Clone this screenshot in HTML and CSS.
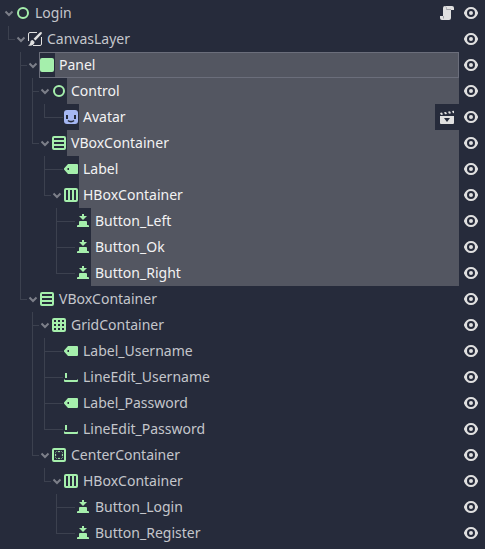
FILE: index.html
```html
<!DOCTYPE html>
<html lang="en">
<head>
<meta charset="utf-8">
<meta name="viewport" content="width=device-width, initial-scale=1">
<title>Scene tree</title>
<link rel="stylesheet" href="styles.css">
</head>
<body>
<svg class="sprites" aria-hidden="true">
  <symbol id="fold" viewBox="0 0 12 12"><path d="M2.500 4.500 6 8l3.500-3.500" fill="none" stroke="#7c7f89" stroke-width="2"/></symbol>
  <symbol id="control" viewBox="0 0 16 16"><circle cx="8" cy="8" r="5" fill="none" stroke="#a5efac" stroke-width="2"/></symbol>
  <symbol id="canvas" viewBox="0 0 16 16"><path d="M10 1.500H3A1.500 1.500 0 0 0 1.500 3v7M6 14.500h7a1.500 1.500 0 0 0 1.500-1.500V6" fill="none" stroke="#e0e0e0"/><path d="M14.600 1.300c-.5-.5-1.200-.3-1.800.2L6.600 7.700l1.900 1.900 6-6.500c.5-.6.600-1.300.1-1.800ZM5.600 9c-1.500 0-2.100 1-2.200 2.200C3.300 12.800 2.500 14 1 14.500c3 .9 6.300-.2 6.600-3.500Z" fill="#e0e0e0"/></symbol>
  <symbol id="panel" viewBox="0 0 16 16"><rect x="1" y="1" width="14" height="14" rx="2" fill="#a5efac"/></symbol>
  <symbol id="sprite" viewBox="0 0 16 16"><rect x="1" y="1" width="14" height="14" rx="3" fill="#a5b7f3"/><path d="M3 6h2v4H3zM11 6h2v4h-2z" fill="#262b3b"/><path d="M5 11.500c1.500 1.500 4.500 1.500 6 0" fill="none" stroke="#262b3b" stroke-width="1.600"/></symbol>
  <symbol id="vbox" viewBox="0 0 16 16"><path fill="#a5efac" fill-rule="evenodd" d="M3 1h10a2 2 0 0 1 2 2v10a2 2 0 0 1-2 2H3a2 2 0 0 1-2-2V3a2 2 0 0 1 2-2ZM3 3v2h10V3ZM3 7v2h10V7ZM3 11v2h10v-2Z"/></symbol>
  <symbol id="hbox" viewBox="0 0 16 16"><path fill="#a5efac" fill-rule="evenodd" d="M3 1h10a2 2 0 0 1 2 2v10a2 2 0 0 1-2 2H3a2 2 0 0 1-2-2V3a2 2 0 0 1 2-2ZM3 3v10h2V3ZM7 3v10h2V3ZM11 3v10h2V3Z"/></symbol>
  <symbol id="grid" viewBox="0 0 16 16"><path fill="#a5efac" fill-rule="evenodd" d="M3 1h10a2 2 0 0 1 2 2v10a2 2 0 0 1-2 2H3a2 2 0 0 1-2-2V3a2 2 0 0 1 2-2ZM3 3v2h2V3ZM7 3v2h2V3ZM11 3v2h2V3ZM3 7v2h2V7ZM7 7v2h2V7ZM11 7v2h2V7ZM3 11v2h2v-2ZM7 11v2h2v-2ZM11 11v2h2v-2Z"/></symbol>
  <symbol id="center" viewBox="0 0 16 16"><rect x="2" y="2" width="12" height="12" rx="1" fill="none" stroke="#a5efac" stroke-width="2"/><path d="M6.500 4h3L8 5.500ZM4 6.500v3L5.500 8ZM12 6.500v3L10.500 8ZM6.500 12h3L8 10.500Z" fill="#a5efac"/><path d="M4.500 5.500l1-1M10.500 4.500l1 1M4.500 10.500l1 1M11.500 10.500l-1 1" stroke="#a5efac"/></symbol>
  <symbol id="label" viewBox="0 0 16 16"><path fill="#a5efac" fill-rule="evenodd" d="M5 3h9a1 1 0 0 1 1 1v8a1 1 0 0 1-1 1H5L1 8.500v-1ZM4.500 7v2h1.500V7Z"/></symbol>
  <symbol id="line" viewBox="0 0 16 16"><path fill="#a5efac" d="M2 4h2v5H2zM1 10.500h1V11h12v-.500h1V12a1 1 0 0 1-1 1H2a1 1 0 0 1-1-1Z"/></symbol>
  <symbol id="button" viewBox="0 0 16 16"><path fill="#a5efac" d="M7 1h2v2h3L8 7 4 3h3ZM5 8h6a1 1 0 0 1 1 1v3h1a1 1 0 0 1 1 1v1H2v-1a1 1 0 0 1 1-1h1V9a1 1 0 0 1 1-1Z"/></symbol>
  <symbol id="eye" viewBox="0 0 16 16"><path fill="#e0e0e0" fill-rule="evenodd" d="M8 2c3.200 0 5.900 2 7 5.500v1C13.900 12 11.200 14 8 14s-5.900-2-7-5.500v-1C2.100 4 4.800 2 8 2Zm0 2a4 4 0 1 0 0 8 4 4 0 0 0 0-8Zm0 2a2 2 0 1 1 0 4 2 2 0 0 1 0-4Z"/></symbol>
  <symbol id="script" viewBox="0 0 16 16"><path fill="#e0e0e0" d="M6 1h7a2 2 0 0 1 2 2v2h-3v8a2 2 0 0 1-2 2H3a2 2 0 0 1-2-2v-2h3V3a2 2 0 0 1 2-2Z"/><path d="M4.500 11v2.500M6.500 1.500C7.500 2 7.500 3 7.500 4.500H12" fill="none" stroke="#a3a4aa"/></symbol>
  <symbol id="scene" viewBox="0 0 16 16"><path fill="#e0e0e0" fill-rule="evenodd" d="M1 7h14v7a1 1 0 0 1-1 1H2a1 1 0 0 1-1-1ZM5 9l3 4 3-4ZM1 4l2-.500 1 2-2 .500ZM5 3.300l2-.400 1 2-2 .400ZM9 2.700l2-.400 1 2-2 .400ZM13 2l2-.300V4l-1 .200Z"/></symbol>
</svg>
<ul class="tree root">
  <li><div class="row"><button class="fold" aria-label="Fold Login"><svg><use href="#fold"/></svg></button><div class="item"><svg class="icon"><use href="#control"/></svg><span class="name">Login</span><button class="action" aria-label="Open script"><svg class="icon"><use href="#script"/></svg></button></div><button class="eye" aria-label="Toggle Login"><svg class="icon"><use href="#eye"/></svg></button></div>
  <ul class="tree">
    <li><div class="row"><button class="fold" aria-label="Fold CanvasLayer"><svg><use href="#fold"/></svg></button><div class="item"><svg class="icon"><use href="#canvas"/></svg><span class="name">CanvasLayer</span></div><button class="eye" aria-label="Toggle CanvasLayer"><svg class="icon"><use href="#eye"/></svg></button></div>
    <ul class="tree">
      <li class="selected"><div class="row"><button class="fold" aria-label="Fold Panel"><svg><use href="#fold"/></svg></button><div class="item focused"><svg class="icon"><use href="#panel"/></svg><span class="name">Panel</span></div><button class="eye" aria-label="Toggle Panel"><svg class="icon"><use href="#eye"/></svg></button></div>
      <ul class="tree">
        <li><div class="row"><button class="fold" aria-label="Fold Control"><svg><use href="#fold"/></svg></button><div class="item"><svg class="icon"><use href="#control"/></svg><span class="name">Control</span></div><button class="eye" aria-label="Toggle Control"><svg class="icon"><use href="#eye"/></svg></button></div>
        <ul class="tree">
          <li class="leaf"><div class="row"><div class="item"><svg class="icon"><use href="#sprite"/></svg><span class="name">Avatar</span><button class="action" aria-label="Open scene"><svg class="icon"><use href="#scene"/></svg></button></div><button class="eye" aria-label="Toggle Avatar"><svg class="icon"><use href="#eye"/></svg></button></div></li>
        </ul></li>
        <li><div class="row"><button class="fold" aria-label="Fold VBoxContainer"><svg><use href="#fold"/></svg></button><div class="item"><svg class="icon"><use href="#vbox"/></svg><span class="name">VBoxContainer</span></div><button class="eye" aria-label="Toggle VBoxContainer"><svg class="icon"><use href="#eye"/></svg></button></div>
        <ul class="tree">
          <li class="leaf"><div class="row"><div class="item"><svg class="icon"><use href="#label"/></svg><span class="name">Label</span></div><button class="eye" aria-label="Toggle Label"><svg class="icon"><use href="#eye"/></svg></button></div></li>
          <li><div class="row"><button class="fold" aria-label="Fold HBoxContainer"><svg><use href="#fold"/></svg></button><div class="item"><svg class="icon"><use href="#hbox"/></svg><span class="name">HBoxContainer</span></div><button class="eye" aria-label="Toggle HBoxContainer"><svg class="icon"><use href="#eye"/></svg></button></div>
          <ul class="tree">
            <li class="leaf"><div class="row"><div class="item"><svg class="icon"><use href="#button"/></svg><span class="name">Button_Left</span></div><button class="eye" aria-label="Toggle Button_Left"><svg class="icon"><use href="#eye"/></svg></button></div></li>
            <li class="leaf"><div class="row"><div class="item"><svg class="icon"><use href="#button"/></svg><span class="name">Button_Ok</span></div><button class="eye" aria-label="Toggle Button_Ok"><svg class="icon"><use href="#eye"/></svg></button></div></li>
            <li class="leaf"><div class="row"><div class="item"><svg class="icon"><use href="#button"/></svg><span class="name">Button_Right</span></div><button class="eye" aria-label="Toggle Button_Right"><svg class="icon"><use href="#eye"/></svg></button></div></li>
          </ul></li>
        </ul></li>
      </ul></li>
      <li><div class="row"><button class="fold" aria-label="Fold VBoxContainer"><svg><use href="#fold"/></svg></button><div class="item"><svg class="icon"><use href="#vbox"/></svg><span class="name">VBoxContainer</span></div><button class="eye" aria-label="Toggle VBoxContainer"><svg class="icon"><use href="#eye"/></svg></button></div>
      <ul class="tree">
        <li><div class="row"><button class="fold" aria-label="Fold GridContainer"><svg><use href="#fold"/></svg></button><div class="item"><svg class="icon"><use href="#grid"/></svg><span class="name">GridContainer</span></div><button class="eye" aria-label="Toggle GridContainer"><svg class="icon"><use href="#eye"/></svg></button></div>
        <ul class="tree">
          <li class="leaf"><div class="row"><div class="item"><svg class="icon"><use href="#label"/></svg><span class="name">Label_Username</span></div><button class="eye" aria-label="Toggle Label_Username"><svg class="icon"><use href="#eye"/></svg></button></div></li>
          <li class="leaf"><div class="row"><div class="item"><svg class="icon"><use href="#line"/></svg><span class="name">LineEdit_Username</span></div><button class="eye" aria-label="Toggle LineEdit_Username"><svg class="icon"><use href="#eye"/></svg></button></div></li>
          <li class="leaf"><div class="row"><div class="item"><svg class="icon"><use href="#label"/></svg><span class="name">Label_Password</span></div><button class="eye" aria-label="Toggle Label_Password"><svg class="icon"><use href="#eye"/></svg></button></div></li>
          <li class="leaf"><div class="row"><div class="item"><svg class="icon"><use href="#line"/></svg><span class="name">LineEdit_Password</span></div><button class="eye" aria-label="Toggle LineEdit_Password"><svg class="icon"><use href="#eye"/></svg></button></div></li>
        </ul></li>
        <li><div class="row"><button class="fold" aria-label="Fold CenterContainer"><svg><use href="#fold"/></svg></button><div class="item"><svg class="icon"><use href="#center"/></svg><span class="name">CenterContainer</span></div><button class="eye" aria-label="Toggle CenterContainer"><svg class="icon"><use href="#eye"/></svg></button></div>
        <ul class="tree">
          <li><div class="row"><button class="fold" aria-label="Fold HBoxContainer"><svg><use href="#fold"/></svg></button><div class="item"><svg class="icon"><use href="#hbox"/></svg><span class="name">HBoxContainer</span></div><button class="eye" aria-label="Toggle HBoxContainer"><svg class="icon"><use href="#eye"/></svg></button></div>
          <ul class="tree">
            <li class="leaf"><div class="row"><div class="item"><svg class="icon"><use href="#button"/></svg><span class="name">Button_Login</span></div><button class="eye" aria-label="Toggle Button_Login"><svg class="icon"><use href="#eye"/></svg></button></div></li>
            <li class="leaf"><div class="row"><div class="item"><svg class="icon"><use href="#button"/></svg><span class="name">Button_Register</span></div><button class="eye" aria-label="Toggle Button_Register"><svg class="icon"><use href="#eye"/></svg></button></div></li>
          </ul></li>
        </ul></li>
      </ul></li>
    </ul></li>
  </ul></li>
</ul>
</body>
</html>
```
FILE: styles.css
```css
* { box-sizing: border-box; }

body {
  margin: 0;
  background: #262b3b;
  color: #c4c6cb;
  font: 14px/26px "Noto Sans", sans-serif;
}

.sprites { position: absolute; width: 0; height: 0; }

.tree { list-style: none; margin: 0; padding: 0 0 0 12px; }
.root { padding-left: 0; }

li { position: relative; }

/* Guide lines that join each node to its parent */
.tree .tree > li::before,
.tree .tree > li::after {
  content: "";
  position: absolute;
  left: -4px;
  background: #3c414f;
}
.tree .tree > li::before { top: 0; width: 1px; height: 100%; }
.tree .tree > li:last-child::before { height: 14px; }
.tree .tree > li::after { top: 13px; width: 7px; height: 1px; }
.tree .tree > li.leaf::after { width: 19px; }

.row { display: flex; height: 26px; padding-left: 3px; }
.leaf > .row { padding-left: 15px; }

button {
  display: flex;
  align-items: center;
  justify-content: center;
  flex: none;
  margin: 0;
  padding: 0;
  border: 0;
  background: #262b3b;
}

.fold { width: 12px; }
.fold svg { width: 12px; height: 12px; }
.icon { width: 16px; height: 16px; flex: none; }

.item { display: flex; align-items: center; flex: 1; min-width: 0; }
.name { flex: 1; min-width: 0; padding-left: 4px; white-space: nowrap; }
.action { width: 24px; height: 26px; }
.eye { width: 26px; padding-right: 2px; }

.selected .name { background: #535661; color: #f2f2f3; }
.focused { outline: 1px solid #6b6e7b; outline-offset: -1px; }
```
